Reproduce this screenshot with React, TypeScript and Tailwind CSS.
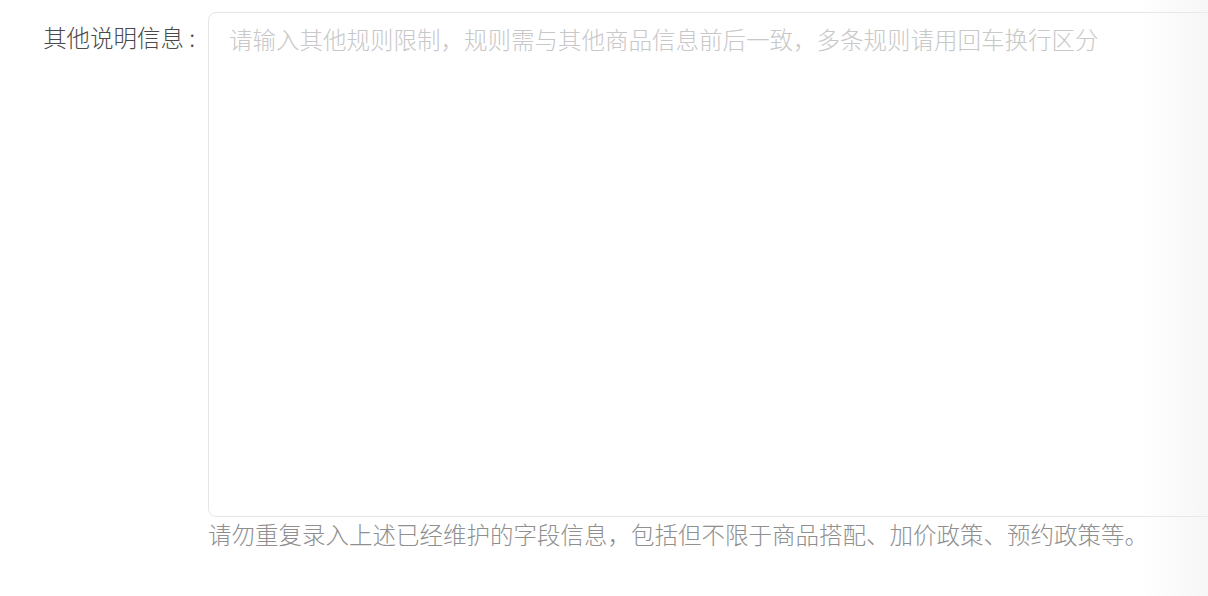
import React, { useState } from 'react';

const font = { fontFamily: '"Noto Sans CJK SC", "Noto Sans", sans-serif' };

export default function App() {
  const [value, setValue] = useState('');

  return (
    <div className="relative w-[1208px] h-[596px] overflow-hidden bg-white" style={font}>
      <div className="flex pt-[12px]">
        {/* 标签 */}
        <label className="w-[208px] shrink-0 pr-[13px] pt-[8px] flex justify-end text-[23.5px] leading-[35px] font-light text-[#4a4a4a]">
          <span>其他说明信息</span>
          <span className="ml-[5px]">:</span>
        </label>

        <div className="shrink-0 w-[1040px]">
          <textarea
            value={value}
            onChange={(e) => setValue(e.target.value)}
            placeholder="请输入其他规则限制，规则需与其他商品信息前后一致，多条规则请用回车换行区分"
            className="block w-full h-[505px] resize-none rounded-[8px] border border-[#e6e6e6] bg-white px-[20px] pt-[9px] text-[23.5px] leading-[35px] font-light text-[#333333] placeholder:text-[#c8c8c8] outline-none"
          />
          <p className="mt-0 text-[23.5px] leading-[35px] font-light text-[#8f8f8f]">
            请勿重复录入上述已经维护的字段信息，包括但不限于商品搭配、加价政策、预约政策等。
          </p>
        </div>
      </div>

      {/* 右侧阴影 */}
      <div className="pointer-events-none absolute right-0 top-0 h-full w-[70px] bg-gradient-to-r from-transparent to-[#ededed]/50" />
    </div>
  );
}
